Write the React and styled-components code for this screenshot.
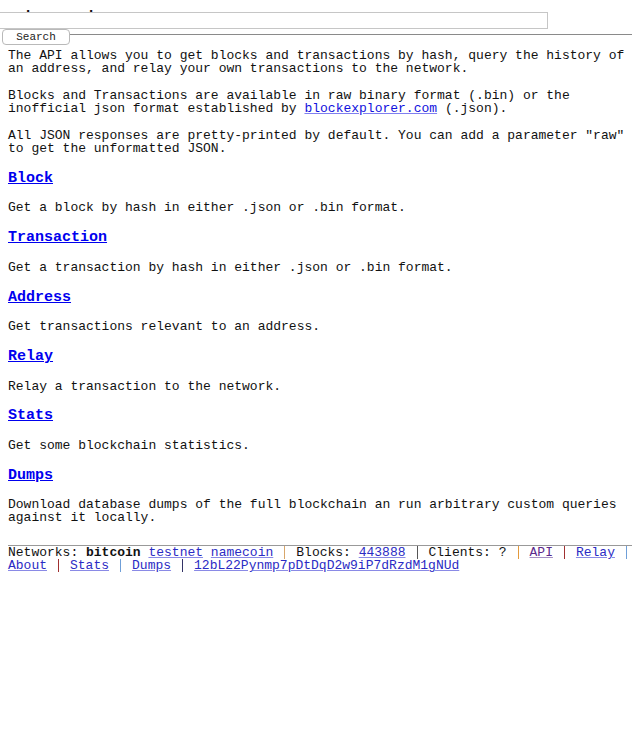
import React from "react";
import styled, { createGlobalStyle } from "styled-components";

const GlobalStyle = createGlobalStyle`
  html, body {
    margin: 0;
    padding: 0;
    background: #fff;
  }
  body {
    font-family: "Liberation Mono", "Courier New", monospace;
    font-size: 13px;
    line-height: 13px;
    color: #111;
  }
`;

const Page = styled.div`
  padding: 0 8px;
  overflow: hidden;
`;

const Masthead = styled.div`
  height: 12px;
  padding-top: 10px;
  box-sizing: border-box;
`;

const ClipWindow = styled.div`
  height: 2px;
  overflow: hidden;
`;

const SiteTitle = styled.h1`
  margin: -12px 0 0;
  font-size: 15px;
  line-height: 15px;
  font-weight: bold;
  white-space: nowrap;
`;

const SearchForm = styled.form`
  margin: 0 -8px;
`;

const QueryInput = styled.input`
  display: block;
  box-sizing: border-box;
  margin: 0 0 0 -1px;
  width: 549px;
  height: 17px;
  padding: 0 3px;
  border: 1px solid #c6c6c6;
  font: 13px "Liberation Mono", monospace;
  outline: none;
`;

const ButtonRow = styled.div`
  display: flex;
  align-items: flex-start;
  height: 16px;
`;

const SearchButton = styled.button`
  box-sizing: border-box;
  margin-left: 2px;
  width: 68px;
  height: 16px;
  padding: 0;
  border: 1px solid #b9b9b9;
  border-radius: 4px;
  background: #fff;
  color: #222;
  font: 11px "Liberation Mono", monospace;
  line-height: 13px;
`;

const Rule = styled.div`
  flex: 1;
  margin: 5px 8px 0 0;
  height: 1px;
  background: #8a8a8a;
`;

const Intro = styled.p`
  margin: 4px 0 14px;
`;

const Para = styled.p`
  margin: 14px 0;
`;

const SectionTitle = styled.h2`
  margin: 15.8px 0 15.6px;
  font-size: 15px;
  line-height: 15px;
  font-weight: bold;

  a {
    color: #0000ee;
  }
`;

const Link = styled.a`
  color: #1111dd;
  text-decoration-color: #7f7ff0;
`;

const Footer = styled.div`
  margin-top: 21px;
  border-top: 1px solid #999;
`;

const FootList = styled.div`
  margin-right: -12px;
  line-height: 13px;
`;

const Item = styled.span`
  display: inline-block;
  line-height: 13px;
  padding-right: 11px;
  margin-right: 11px;
  border-right: 1px solid ${(p) => p.$sep};
  white-space: nowrap;
  vertical-align: top;

  &:last-child {
    border-right: none;
  }
`;

const FootLink = styled.a`
  color: ${(p) => (p.$visited ? "#5b2a8c" : "#2b2bc4")};
  text-decoration-color: ${(p) => (p.$visited ? "#a58fc4" : "#8a8ae6")};
`;

const sections = [
  { title: "Block", text: "Get a block by hash in either .json or .bin format." },
  { title: "Transaction", text: "Get a transaction by hash in either .json or .bin format." },
  { title: "Address", text: "Get transactions relevant to an address." },
  { title: "Relay", text: "Relay a transaction to the network." },
  { title: "Stats", text: "Get some blockchain statistics." },
  {
    title: "Dumps",
    text: "Download database dumps of the full blockchain an run arbitrary custom queries against it locally.",
  },
];

export default function App() {
  return (
    <>
      <GlobalStyle />
      <Page>
        <Masthead>
          <ClipWindow>
            <SiteTitle>Explorer paths</SiteTitle>
          </ClipWindow>
        </Masthead>
        <SearchForm onSubmit={(e) => e.preventDefault()}>
          <QueryInput type="text" />
          <ButtonRow>
            <SearchButton type="submit">Search</SearchButton>
            <Rule />
          </ButtonRow>
        </SearchForm>

        <Intro>
          The API allows you to get blocks and transactions by hash, query the history of an
          address, and relay your own transactions to the network.
        </Intro>
        <Para>
          Blocks and Transactions are available in raw binary format (.bin) or the inofficial
          json format established by <Link href="#">blockexplorer.com</Link> (.json).
        </Para>
        <Para>
          All JSON responses are pretty-printed by default. You can add a parameter "raw" to get
          the unformatted JSON.
        </Para>

        {sections.map((s) => (
          <React.Fragment key={s.title}>
            <SectionTitle>
              <a href="#">{s.title}</a>
            </SectionTitle>
            <Para>{s.text}</Para>
          </React.Fragment>
        ))}

        <Footer>
          <FootList>
            <Item $sep="#d8a66a">
              Networks: <b>bitcoin</b> <FootLink href="#">testnet</FootLink>{" "}
              <FootLink href="#">namecoin</FootLink>
            </Item>
            <Item $sep="#555">
              Blocks: <FootLink href="#">443888</FootLink>
            </Item>
            <Item $sep="#e39a3c">Clients: ?</Item>
            <Item $sep="#a03030">
              <FootLink href="#" $visited>API</FootLink>
            </Item>
            <Item $sep="#6f9fd8">
              <FootLink href="#">Relay</FootLink>
            </Item>
            <Item $sep="#a03030">
              <FootLink href="#">About</FootLink>
            </Item>
            <Item $sep="#6f9fd8">
              <FootLink href="#">Stats</FootLink>
            </Item>
            <Item $sep="#333366">
              <FootLink href="#">Dumps</FootLink>
            </Item>
            <Item $sep="transparent">
              <FootLink href="#">12bL22Pynmp7pDtDqD2w9iP7dRzdM1gNUd</FootLink>
            </Item>
          </FootList>
        </Footer>
      </Page>
    </>
  );
}
